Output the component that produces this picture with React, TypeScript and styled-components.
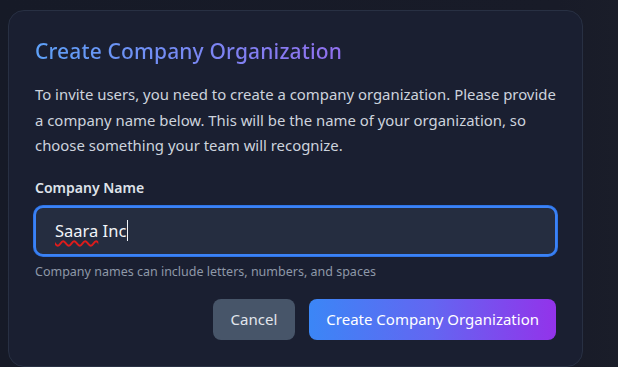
import styled, { createGlobalStyle } from 'styled-components';

const GlobalStyle = createGlobalStyle`
  html, body {
    margin: 0;
    padding: 0;
    background: #171a26;
  }
  body {
    font-family: "Noto Sans", "Open Sans", sans-serif;
    -webkit-font-smoothing: antialiased;
  }
`;

export default function App() {
  return (
    <>
      <GlobalStyle />
      <Page>
        <Card>
          <Title>Create Company Organization</Title>
          <Intro>
            To invite users, you need to create a company organization. Please provide
            a company name below. This will be the name of your organization, so
            choose something your team will recognize.
          </Intro>
          <Label htmlFor="company-name">Company Name</Label>
          <Field id="company-name" role="textbox">
            <Misspelled>Saara</Misspelled>&nbsp;Inc<Caret />
          </Field>
          <Hint>Company names can include letters, numbers, and spaces</Hint>
          <Actions>
            <Button $variant="secondary">Cancel</Button>
            <Button $variant="primary">Create Company Organization</Button>
          </Actions>
        </Card>
      </Page>
    </>
  );
}

const Page = styled.div`
  min-height: 367px;
  padding: 10px 0 0 8px;
  box-sizing: border-box;
  background: linear-gradient(90deg, #161a27 0%, #181b28 90%, #1a1d29 100%);
  overflow: hidden;
`;

const Card = styled.div`
  width: 575px;
  box-sizing: border-box;
  padding: 26px 26px 26px 26px;
  background: #1a1f31;
  border: 1px solid #283043;
  border-radius: 16px;
  display: flex;
  flex-direction: column;
`;

const Title = styled.h2`
  margin: 0;
  font-size: 21px;
  line-height: 29px;
  font-weight: 500;
  letter-spacing: 0.15px;
  background: linear-gradient(90deg, #5ea1f8 0%, #7a86f3 55%, #9170ee 100%);
  -webkit-background-clip: text;
  background-clip: text;
  color: transparent;
  align-self: flex-start;
`;

const Intro = styled.p`
  margin: 16px 0 0;
  font-size: 14.9px;
  line-height: 25.5px;
  color: #cdd3dd;
`;

const Label = styled.label`
  margin-top: 19px;
  font-size: 14px;
  line-height: 20px;
  font-weight: 600;
  color: #dfe3ea;
`;

const Field = styled.div`
  margin: 8px -1px 0;
  height: 50px;
  box-sizing: border-box;
  border: 2px solid #3b82f6;
  box-shadow: 0 0 0 1px #2f74e6;
  border-radius: 9px;
  background: #252d40;
  padding: 0 16px 0 19px;
  display: flex;
  align-items: center;
  font-size: 16.5px;
  color: #f1f4f8;
`;

const Misspelled = styled.span`
  text-decoration: underline wavy #e01b1b;
  text-decoration-thickness: 1.5px;
  text-underline-offset: 3px;
`;

const Caret = styled.span`
  display: inline-block;
  width: 1px;
  height: 21px;
  margin-left: 1px;
  background: #f1f4f8;
`;

const Hint = styled.p`
  margin: 8px 0 0;
  font-size: 12.5px;
  line-height: 16px;
  color: #8e98a8;
`;

const Actions = styled.div`
  margin-top: 19px;
  display: flex;
  justify-content: flex-end;
  gap: 14px;
`;

const Button = styled.button<{ $variant: 'primary' | 'secondary' }>`
  height: 41px;
  padding: 0 ${p => (p.$variant === 'primary' ? 17 : 18)}px;
  border: none;
  border-radius: 8px;
  font-family: inherit;
  font-size: 15px;
  color: ${p => (p.$variant === 'primary' ? '#ffffff' : '#e2e6ec')};
  background: ${p =>
    p.$variant === 'primary'
      ? 'linear-gradient(90deg, #3b86f6 0%, #6366f1 50%, #9333ea 100%)'
      : '#475569'};
  cursor: pointer;
`;
